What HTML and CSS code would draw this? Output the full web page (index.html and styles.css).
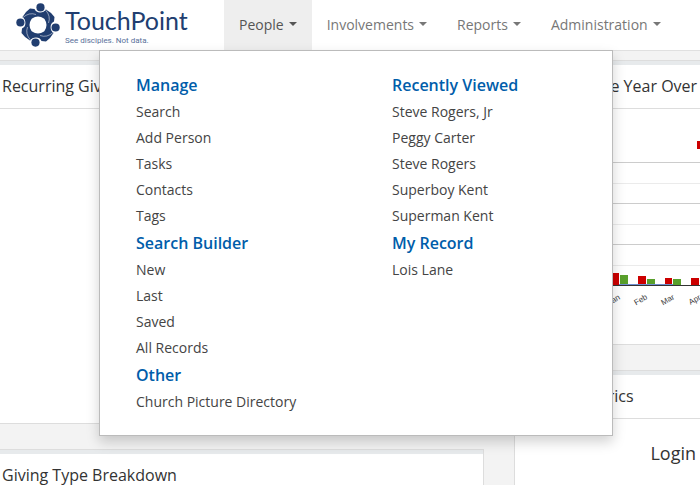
FILE: index.html
```html
<!DOCTYPE html>
<html lang="en">
<head>
    <meta charset="UTF-8">
    <meta name="viewport" content="width=device-width, initial-scale=1.0">
    <title>TouchPoint</title>
    <link rel="stylesheet" href="styles.css">
</head>
<body>

    <!-- Top navigation -->
    <header class="navbar">
        <a class="brand" href="#">
            <svg class="brand-mark" viewBox="-23 -23 46 46" aria-hidden="true">
                <defs>
                    <g id="person">
                        <circle cx="2.5" cy="-17.6" r="4.1"/>
                        <path d="M-15.5 -8 Q-12.5 -13.5 -8 -16.5 L-3.5 -16 Q-2 -12.6 2 -12.6 Q6 -12.6 8 -15.5 L10 -8 L6 -6.5 Q0 -10.5 -6 -6.5 L-9 -4Z"/>
                    </g>
                    <path id="seam" d="M-15 -7.5 Q-9 -13 -2 -10.5"/>
                </defs>
                <use href="#person"/>
                <use href="#person" transform="rotate(90)"/>
                <use href="#person" transform="rotate(180)"/>
                <use href="#person" transform="rotate(270)"/>
                <g class="seams">
                    <use href="#seam"/>
                    <use href="#seam" transform="rotate(90)"/>
                    <use href="#seam" transform="rotate(180)"/>
                    <use href="#seam" transform="rotate(270)"/>
                </g>
            </svg>
            <span class="brand-text">
                <span class="brand-name">TouchPoint</span>
                <span class="brand-tagline">See disciples. Not data.</span>
            </span>
        </a>
        <nav class="nav">
            <button class="nav-item active" type="button">People <span class="caret"></span></button>
            <button class="nav-item" type="button">Involvements <span class="caret"></span></button>
            <button class="nav-item" type="button">Reports <span class="caret"></span></button>
            <button class="nav-item" type="button">Administration <span class="caret"></span></button>
        </nav>

        <!-- People menu -->
        <div class="mega-menu">
            <div class="menu-column">
                <h2>Manage</h2>
                <ul>
                    <li><a href="#">Search</a></li>
                    <li><a href="#">Add Person</a></li>
                    <li><a href="#">Tasks</a></li>
                    <li><a href="#">Contacts</a></li>
                    <li><a href="#">Tags</a></li>
                </ul>
                <h2>Search Builder</h2>
                <ul>
                    <li><a href="#">New</a></li>
                    <li><a href="#">Last</a></li>
                    <li><a href="#">Saved</a></li>
                    <li><a href="#">All Records</a></li>
                </ul>
                <h2>Other</h2>
                <ul>
                    <li><a href="#">Church Picture Directory</a></li>
                </ul>
            </div>
            <div class="menu-column">
                <h2>Recently Viewed</h2>
                <ul>
                    <li><a href="#">Steve Rogers, Jr</a></li>
                    <li><a href="#">Peggy Carter</a></li>
                    <li><a href="#">Steve Rogers</a></li>
                    <li><a href="#">Superboy Kent</a></li>
                    <li><a href="#">Superman Kent</a></li>
                </ul>
                <h2>My Record</h2>
                <ul>
                    <li><a href="#">Lois Lane</a></li>
                </ul>
            </div>
        </div>
    </header>

    <!-- Dashboard -->
    <main class="dashboard">
        <div class="column column-left">
            <section class="panel">
                <h3 class="panel-title">Recurring Giving</h3>
                <div class="panel-body giving"></div>
            </section>
            <section class="panel">
                <h3 class="panel-title">Giving Type Breakdown</h3>
                <div class="panel-body"></div>
            </section>
        </div>
        <div class="column column-right">
            <section class="panel">
                <h3 class="panel-title">Attendance Year Over</h3>
                <div class="panel-body">
                    <svg class="chart" width="240" height="235" viewBox="0 0 240 235">
                        <g class="grid-minor">
                            <path d="M40 74.5H240M40 115.5H240M40 156.5H240"/>
                        </g>
                        <g class="grid-major">
                            <path d="M40 53.5H240M40 94.5H240M40 135.5H240"/>
                        </g>
                        <g class="this-year">
                            <rect x="182" y="32" width="8" height="8"/>
                            <rect x="96" y="164" width="8" height="12"/>
                            <rect x="123" y="167" width="8" height="9"/>
                            <rect x="150" y="169" width="7" height="7"/>
                            <rect x="176" y="169" width="8" height="7"/>
                        </g>
                        <g class="last-year">
                            <rect x="105" y="166" width="8" height="10"/>
                            <rect x="132" y="170" width="8" height="6"/>
                            <rect x="158" y="170" width="8" height="6"/>
                        </g>
                        <path class="trend" d="M104 175.5H158"/>
                        <path class="axis" d="M40 176.5H240"/>
                        <g class="months">
                            <text transform="translate(100 193) rotate(-30)">Jan</text>
                            <text transform="translate(127 193) rotate(-30)">Feb</text>
                            <text transform="translate(154 193) rotate(-30)">Mar</text>
                            <text transform="translate(181 193) rotate(-30)">Apr</text>
                        </g>
                    </svg>
                </div>
            </section>
            <section class="panel">
                <h3 class="panel-title">Login Metrics</h3>
                <div class="panel-body metrics">Login</div>
            </section>
        </div>
    </main>

</body>
</html>
```
FILE: styles.css
```css
* {
    box-sizing: border-box;
}

body {
    margin: 0;
    min-height: 100vh;
    background-color: #f3f3f3;
    color: #333;
    font-family: "Open Sans", sans-serif;
    font-size: 14px;
    overflow: hidden;
}

/* Navbar */
.navbar {
    position: relative;
    display: flex;
    height: 51px;
    background-color: #fff;
    border-bottom: 1px solid #e0e0e0;
}

.brand {
    display: flex;
    flex: none;
    width: 224px;
    padding: 2px 0 0 15px;
    gap: 4px;
    text-decoration: none;
}

.brand-mark {
    width: 46px;
    height: 46px;
    fill: #213e70;
}

.seams {
    fill: none;
    stroke: #fff;
    stroke-width: 0.5;
}

.brand-text {
    display: flex;
    flex-direction: column;
    gap: 2px;
    padding-top: 4px;
    font-family: Lato, sans-serif;
}

.brand-name {
    font-size: 25px;
    line-height: 28px;
    color: #213e70;
}

.brand-tagline {
    font-family: Roboto, sans-serif;
    font-size: 8px;
    line-height: 10px;
    color: #58709a;
}

.nav {
    display: flex;
}

.nav-item {
    display: flex;
    align-items: center;
    gap: 5px;
    padding: 0 15px 2px;
    border: 0;
    background: none;
    color: #777;
    font: inherit;
    cursor: pointer;
}

.nav-item.active {
    background-color: #eee;
    color: #555;
}

.caret {
    border-top: 4px solid currentColor;
    border-left: 4px solid transparent;
    border-right: 4px solid transparent;
}

/* People menu */
.mega-menu {
    position: absolute;
    top: 50px;
    left: 99px;
    z-index: 10;
    display: grid;
    grid-template-columns: 256px 220px;
    padding: 20px 0 20px 36px;
    background-color: #fff;
    border: 1px solid #bbb;
    box-shadow: 0 6px 12px rgba(0, 0, 0, 0.18);
}

.mega-menu h2 {
    margin: 0;
    font-size: 16px;
    font-weight: 600;
    line-height: 28px;
    color: #005daa;
}

.mega-menu ul {
    margin: 0;
    padding: 0;
    list-style: none;
}

.mega-menu a {
    display: block;
    line-height: 26px;
    color: #444;
    text-decoration: none;
}

/* Dashboard */
.dashboard {
    display: flex;
    gap: 30px;
    padding-top: 9px;
}

.column {
    display: flex;
    flex-direction: column;
    gap: 25px;
}

.column-left {
    flex: 484;
}

.column-right {
    flex: 186;
    min-width: 0;
}

.panel {
    background-color: #fff;
    border: 1px solid #ddd;
    border-left: 0;
}

.column-right .panel {
    border-left: 1px solid #ddd;
    border-right: 0;
}

.panel-title {
    margin: 0;
    padding: 0 2px;
    border-top: 4px solid #e7eaec;
    border-bottom: 1px solid #ddd;
    font-size: 16px;
    font-weight: 400;
    line-height: 43px;
    white-space: nowrap;
}

.column-right .panel-title {
    padding: 0 19px;
}

.panel-body {
    overflow: hidden;
}

.giving {
    height: 314px;
}

/* Attendance chart */
.chart {
    display: block;
}

.grid-minor {
    stroke: #ebebeb;
}

.grid-major {
    stroke: #ccc;
}

.axis {
    stroke: #333;
}

.trend {
    stroke: #6f8fd0;
}

.this-year {
    fill: #c00;
}

.last-year {
    fill: #59a02c;
}

.months {
    fill: #444;
    font-family: "Liberation Sans", sans-serif;
    font-size: 8px;
    text-anchor: middle;
}

.metrics {
    padding: 20px 4px;
    font-size: 18px;
    line-height: 28px;
    text-align: right;
}
```
